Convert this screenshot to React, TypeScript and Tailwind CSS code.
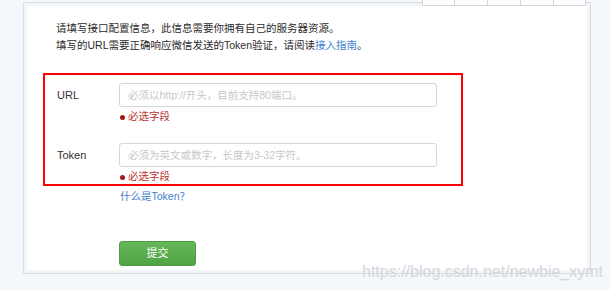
import React from "react";

const font = "font-['Liberation_Sans','Noto_Sans_CJK_SC',sans-serif]";

function Field({ label, placeholder }: { label: string; placeholder: string }) {
  return (
    <div className="flex">
      <div className="w-[62px] h-[24px] leading-[24px] text-[11px] text-[#333]">{label}</div>
      <div className="flex flex-col">
        <input
          className="w-[318px] h-[24px] rounded-[3px] border border-[#d6d6d6] bg-white pl-[8px] text-[10.5px] text-[#333] placeholder:text-[#c8c8c8] outline-none"
          placeholder={placeholder}
        />
        <div className="mt-[3px] flex items-center h-[14px] pl-[1px] text-[10.5px] text-[#b8332f]">
          <span className="mr-[3px] inline-block w-[5px] h-[5px] rounded-full bg-[#a3161a]" />
          必选字段
        </div>
      </div>
    </div>
  );
}

export default function App() {
  return (
    <div className={`relative w-[610px] h-[290px] overflow-hidden bg-[#f4f7fb] ${font}`}>
      {/* top-right tab strip, cut off */}
      <div className="absolute top-0 left-[422px] z-10 flex h-[6px] border-b border-[#d3d6db] bg-white">
        <div className="w-[33px] border-l border-r border-[#d3d6db]" />
        <div className="w-[33px] border-r border-[#d3d6db]" />
        <div className="w-[33px] border-r border-[#d3d6db]" />
        <div className="w-[33px] border-r border-[#d3d6db]" />
        <div className="w-[32px] border-r border-[#d3d6db]" />
      </div>

      <div className="ml-[23px] mt-[2px] w-[568px] h-[272px] border border-[#d9dce1] bg-[#f3f5f8] p-[3px]">
        <div className="h-full bg-white">
          <div className="pl-[29px] pt-[14px] text-[10.5px] leading-[17px] text-[#2b2b2b]">
            <p>请填写接口配置信息，此信息需要你拥有自己的服务器资源。</p>
            <p>
              填写的URL需要正确响应微信发送的Token验证，请阅读
              <span className="text-[#3f7fd0]">接入指南</span>。
            </p>
          </div>

          <div className="ml-[16px] mt-[19px] w-[420px] border-2 border-[#ff0000] pl-[12px] pt-[8px]">
            <Field label="URL" placeholder="必须以http://开头，目前支持80端口。" />
            <div className="mt-[19px]">
              <Field label="Token" placeholder="必须为英文或数字，长度为3-32字符。" />
            </div>
          </div>

          <div className="ml-[93px] mt-[3px] h-[14px] leading-[14px] text-[10.5px] text-[#3f7fd0]">
            什么是Token<span className="font-['Noto_Sans_CJK_SC',sans-serif]">？</span>
          </div>

          <button className="ml-[92px] mt-[38px] w-[77px] h-[25px] rounded-[3px] border border-[#4d9c41] bg-linear-to-b from-[#66b759] to-[#50a346] text-[11px] text-white">
            提交
          </button>
        </div>
      </div>

      {/* watermark */}
      <div className="absolute left-[362px] top-[262px] text-[16px] leading-[20px] text-[#d3d7dc] font-['Liberation_Sans',sans-serif]">
        https://blog.csdn.net/newbie_xymt
      </div>
    </div>
  );
}
